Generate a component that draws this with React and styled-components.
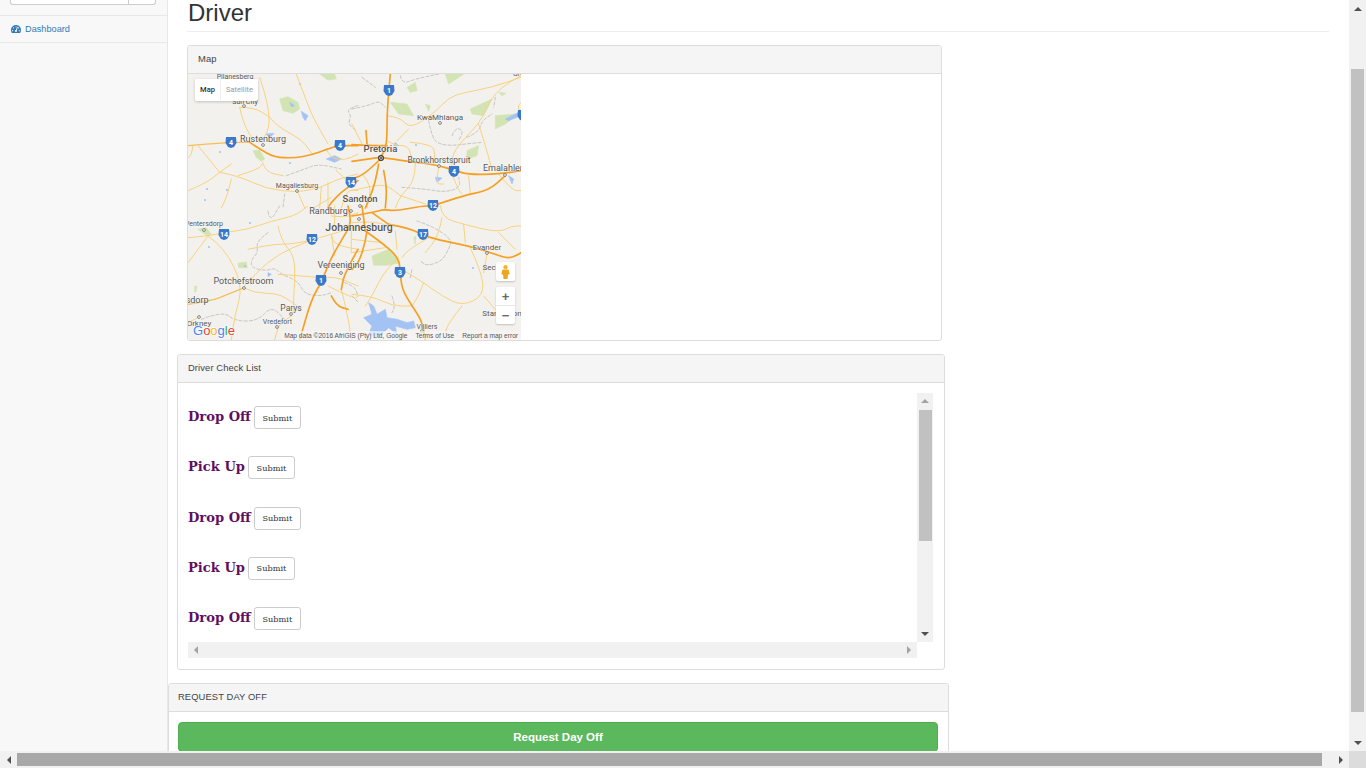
import React from "react";
import styled, { createGlobalStyle } from "styled-components";
import { FaTachometerAlt } from "react-icons/fa";

const GlobalStyle = createGlobalStyle`
  html, body {
    margin: 0;
    padding: 0;
    overflow: hidden;
    background: #fff;
  }
`;

const Screen = styled.div`
  display: grid;
  grid-template-columns: 1349px 17px;
  grid-template-rows: 751px 17px;
  width: 1366px;
  height: 768px;
  overflow: hidden;
  font-family: "Liberation Sans", Arial, sans-serif;
  color: #333;
`;

const Page = styled.div`
  display: flex;
  overflow: hidden;
`;

const Sidebar = styled.aside`
  flex: 0 0 167px;
  background: #f8f8f8;
  border-right: 1px solid #e7e7e7;
`;

const SearchArea = styled.div`
  height: 15px;
  padding: 0 11px 0 10px;
  border-bottom: 1px solid #e7e7e7;
`;

const SearchBox = styled.div`
  display: flex;
  height: 4px;
  background: #fff;
  border: 1px solid #ccc;
  border-top: 0;
  border-radius: 0 0 3px 3px;
  justify-content: flex-end;
`;

const SearchButton = styled.div`
  width: 26px;
  border-left: 1px solid #ccc;
`;

const NavLink = styled.a`
  display: flex;
  align-items: center;
  gap: 4px;
  height: 25px;
  padding: 0 0 1px 11px;
  border-bottom: 1px solid #e7e7e7;
  color: #337ab7;
  font-size: 9.2px;
  svg {
    width: 10px;
    height: 10px;
  }
`;

const Content = styled.main`
  flex: 1;
  padding: 0 20px 0 19px;
  overflow: hidden;
`;

const Title = styled.h1`
  margin: 0 0 13px;
  height: 30px;
  padding: 1px 0 0 1px;
  border-bottom: 1px solid #eee;
  font-size: 24px;
  font-weight: 400;
  line-height: 24px;
  color: #333;
`;

const Panel = styled.section`
  width: ${(p) => p.$width}px;
  margin: 0 0 13px ${(p) => p.$shift || 0}px;
  box-sizing: border-box;
  background: #fff;
  border: 1px solid #ddd;
  border-radius: 3px;
`;

const PanelHeader = styled.div`
  height: 25px;
  padding: 0 ${(p) => p.$inset || 10}px 2px;
  display: flex;
  align-items: center;
  background: #f5f5f5;
  border-bottom: 1px solid #ddd;
  border-radius: 3px 3px 0 0;
  font-size: 9.4px;
  letter-spacing: 0.1px;
  color: #444;
`;

const MapFrame = styled.div`
  position: relative;
  width: 333px;
  height: 266px;
  overflow: hidden;
  background: #f3f1ed;
`;

const MapSvg = styled.svg`
  display: block;
`;

const TypeControl = styled.div`
  position: absolute;
  left: 7px;
  top: 5px;
  display: flex;
  height: 21px;
  padding-bottom: 1px;
  background: #fff;
  border-radius: 2px;
  box-shadow: 0 1px 3px rgba(0, 0, 0, 0.2);
  font-family: Roboto, sans-serif;
  font-size: 7.5px;
`;

const TypeOption = styled.div`
  display: flex;
  align-items: center;
  justify-content: center;
  width: ${(p) => p.$width}px;
  color: ${(p) => (p.$active ? "#333" : "#999")};
  font-weight: ${(p) => (p.$active ? 500 : 400)};
  border-left: ${(p) => (p.$active ? "0" : "1px solid #eee")};
`;

const PegmanButton = styled.div`
  position: absolute;
  left: 308px;
  top: 188px;
  width: 19px;
  height: 19px;
  display: flex;
  align-items: center;
  justify-content: center;
  background: #fff;
  border-radius: 2px;
  box-shadow: 0 1px 2px rgba(0, 0, 0, 0.2);
`;

const ZoomControl = styled.div`
  position: absolute;
  left: 308px;
  top: 213px;
  width: 19px;
  height: 37px;
  display: flex;
  flex-direction: column;
  background: #fff;
  border-radius: 2px;
  box-shadow: 0 1px 2px rgba(0, 0, 0, 0.2);
`;

const ZoomButton = styled.div`
  flex: 1;
  display: flex;
  align-items: center;
  justify-content: center;
  font-size: 13px;
  font-weight: 700;
  line-height: 1;
  color: #666;
  & + & {
    border-top: 1px solid #e6e6e6;
  }
`;

const Attribution = styled.div`
  position: absolute;
  right: 0;
  bottom: 0;
  display: flex;
  gap: 8px;
  height: 9px;
  padding: 0 3px 0 2px;
  background: rgba(245, 245, 245, 0.7);
  font-size: 6.6px;
  line-height: 9px;
  color: #555;
  white-space: nowrap;
`;

const ScrollPane = styled.div`
  display: grid;
  grid-template-columns: 729px 16px;
  grid-template-rows: 249px 16px;
  margin: 10px 0 11px 10px;
  width: 745px;
`;

const ScrollBody = styled.div`
  padding-top: 13px;
  overflow: hidden;
`;

const CheckRow = styled.div`
  display: flex;
  align-items: flex-start;
  gap: 3px;
  height: 50.33px;
`;

const CheckLabel = styled.h4`
  margin: 0;
  height: 23px;
  font-family: "DejaVu Serif", Georgia, serif;
  font-size: 13.1px;
  font-weight: 700;
  line-height: 22px;
  color: #5f0f5f;
`;

const SubmitButton = styled.button`
  width: 47px;
  height: 23px;
  padding: 0;
  background: #fff;
  border: 1px solid #ccc;
  border-radius: 3px;
  font-family: "DejaVu Serif", Georgia, serif;
  font-size: 8.2px;
  color: #333;
`;

const Track = styled.div`
  position: relative;
  display: flex;
  flex-direction: ${(p) => (p.$vertical ? "column" : "row")};
  justify-content: space-between;
  align-items: center;
  background: #f1f1f1;
`;

const ArrowSlot = styled.div`
  flex: 0 0 ${(p) => p.$size}px;
  width: ${(p) => p.$size}px;
  height: ${(p) => p.$size}px;
  display: flex;
  align-items: center;
  justify-content: center;
`;

const Arrow = styled.div`
  width: 0;
  height: 0;
  border-style: solid;
  border-color: transparent;
  border-width: ${(p) => p.$half}px;
  ${(p) => `border-${p.$side}-color: ${p.$color || "#505050"};`}
  ${(p) => `border-${p.$opposite}-width: 0;`}
`;

const VerticalThumb = styled.div`
  position: absolute;
  left: ${(p) => p.$left}px;
  top: ${(p) => p.$top}px;
  width: 13px;
  height: ${(p) => p.$height}px;
  background: #c1c1c1;
`;

const HorizontalThumb = styled.div`
  position: absolute;
  left: 17px;
  top: 2px;
  width: 1305px;
  height: 13px;
  background: #a8a8a8;
`;

const Corner = styled.div`
  background: #dcdcdc;
`;

const RequestBody = styled.div`
  padding: 10px 10px 0 9px;
`;

const RequestButton = styled.button`
  display: block;
  width: 100%;
  height: 30px;
  padding: 0;
  background: #5cb85c;
  border: 1px solid #4cae4c;
  border-radius: 4px;
  font-family: "Liberation Sans", Arial, sans-serif;
  font-size: 11.5px;
  font-weight: 700;
  color: #fff;
`;

// traced per quadrant of the map, in 3x coords from each quadrant's corner
const quadrants = [
  {
    x: 188,
    y: 74,
    green: [
      "275,75 300,68 330,85 335,105 315,118 285,110",
      "395,0 440,0 445,15 420,18",
      "195,230 215,228 230,255 220,262 205,250",
    ],
    water: [
      "340,112 360,125 352,140 345,130",
      "415,255 440,245 460,255 440,265",
      "235,180 258,178 245,192",
      "305,85 320,95 310,98",
    ],
    gray: [
      "295,305 350,285 390,270 460,285",
      "510,95 475,105 490,125 480,150 505,170",
      "290,360 285,402",
    ],
    minor: [
      "0,350 50,330 95,295 130,270",
      "95,295 30,215",
      "15,215 10,245 0,250",
      "130,315 120,360 100,402",
      "95,295 150,305 235,345 330,355 400,340 440,320 470,310 510,300",
      "215,10 232,60 245,130 240,175 215,205",
      "155,100 165,145 190,190",
      "155,100 200,100 245,130",
      "245,130 270,160 340,195 375,243",
      "325,0 355,80 375,130 420,210",
      "150,305 215,285 225,265",
      "225,270 235,295 285,305",
      "420,325 420,402",
      "330,355 350,402",
      "510,350 480,340 460,402",
      "380,400 430,370",
      "415,225 425,250 470,260 510,240",
      "445,290 470,310 490,340",
      "400,340 395,402",
    ],
    medium: ["0,215 120,205 185,205"],
    major: [
      "185,205 215,225 260,250 320,252 370,243 420,225 450,215 510,215",
      "510,320 470,345 430,385 420,402",
    ],
  },
  {
    x: 352,
    y: 74,
    green: [
      "280,0 335,0 305,20 290,30",
      "165,40 190,25 195,50 175,55",
      "115,85 165,90 185,125 140,120",
      "220,90 235,95 230,112",
      "355,105 420,75 395,125 360,120",
      "430,125 495,120 460,150 430,165",
      "345,230 380,215 375,245 345,255",
      "440,55 462,58 450,65",
    ],
    water: [
      "460,135 500,115 507,125 470,140",
      "250,310 270,312 255,325",
      "130,205 140,215 125,215",
      "470,305 485,315 480,330",
    ],
    gray: [
      "145,5 150,30 190,15 260,0",
      "30,10 70,40",
      "0,105 50,95 80,80 100,100",
      "230,140 240,190 260,210 300,215 340,210 390,205",
      "300,185 310,160 335,170 320,200",
      "345,190 380,175 390,140 420,120",
      "150,340 220,345 280,355 325,340 320,310",
      "430,70 425,100",
    ],
    minor: [
      "105,125 145,130 175,165 250,115 290,70 340,55 420,40 507,10",
      "507,5 440,40 400,110 380,150 340,190 300,240 300,290",
      "380,150 405,230 420,290",
      "175,205 240,210 250,240 245,270",
      "135,200 170,165",
      "105,200 130,215 170,215 180,260",
      "190,265 190,320 145,365 130,402",
      "260,280 250,330 275,330",
      "350,305 355,360",
      "440,300 480,350 507,350",
      "300,300 320,350 330,360",
      "145,365 220,390",
      "507,85 495,95 505,115",
      "0,150 30,210",
      "30,300 60,330 45,402",
      "0,350 40,340 100,330 145,365",
    ],
    medium: [],
    major: [
      "115,0 105,100 105,220 85,250",
      "42,170 45,210",
      "0,212 60,215 105,215",
      "0,262 50,255 85,250",
      "85,250 170,262 250,272 310,290 350,302 440,300 507,290",
      "85,255 40,300 0,315",
      "80,270 70,330 40,402",
      "95,290 105,340 100,402",
      "230,400 330,365 410,350 460,305",
    ],
  },
  {
    x: 188,
    y: 206,
    green: [
      "150,172 175,168 178,185 152,185",
      "30,70 55,65 70,85 55,88",
      "20,240 26,240 24,258 20,258",
    ],
    water: ["240,200 250,205 240,212"],
    gray: [
      "240,15 245,50 275,0",
      "240,80 205,105 210,140 190,160 190,185 235,195 260,185 280,205 330,225 350,265 400,270 430,260",
      "40,340 105,315 140,345 210,345 250,300 290,340",
      "470,230 500,240 510,270",
    ],
    minor: [
      "0,95 60,90 105,80 180,70 250,45 320,30 360,0",
      "60,90 30,130 0,170",
      "60,90 110,125 165,240 140,330 130,402",
      "165,245 210,195 270,145 360,105 430,85 510,60",
      "180,130 250,115 300,115 360,105",
      "270,60 280,105 320,150 320,230 315,320",
      "165,245 200,262 270,262 315,290 340,310",
      "270,205 340,210 400,215",
      "310,330 280,350 270,365 260,402",
      "400,215 440,210 510,240",
      "420,240 500,280 510,270",
      "460,250 480,330 490,402",
      "510,130 440,120 430,85",
      "430,85 440,150",
      "490,75 490,140",
      "0,350 30,335",
      "430,30 470,35 510,20",
      "440,0 440,60",
    ],
    medium: ["0,295 70,285 120,265 170,245"],
    major: [
      "480,70 450,120 425,165 400,230 370,280 335,402",
      "510,130 470,200 460,250",
      "430,270 445,300 480,310",
      "480,0 490,40 480,70",
    ],
  },
  {
    x: 352,
    y: 206,
    green: ["60,150 110,130 145,170 105,178 65,178", "185,95 192,90 190,115"],
    water: [
      "50,290 65,300 75,325 100,310 105,335 135,340 165,350 185,345 190,365 165,370 130,360 135,385 110,365 80,395 50,385 60,360 35,335 60,325",
    ],
    gray: [
      "195,45 240,60 300,100 290,130 270,165 225,180 205,165",
      "120,270 130,300 120,320",
      "0,270 20,290",
      "175,215 180,190",
    ],
    minor: [
      "265,0 270,35 335,55 440,80 480,60 507,60",
      "335,55 340,110",
      "270,35 260,90 220,140",
      "230,95 170,130 150,155",
      "355,125 390,200 395,270 330,300 270,270 215,230 150,190",
      "215,230 200,270 180,300",
      "405,145 395,200",
      "330,300 290,350 280,380",
      "140,155 100,190 60,270 40,300",
      "0,265 60,270 120,300 180,300",
      "0,100 90,110",
      "130,75 135,130",
      "0,140 100,125",
      "440,80 490,130",
      "395,270 430,310",
      "0,50 60,45 110,60",
    ],
    medium: [],
    major: [
      "0,30 60,20 95,10 130,15 210,0 240,0",
      "110,55 170,65 230,95 300,110 370,125 430,145 470,158 500,145 507,140",
      "40,75 90,110 140,155 145,200 150,250 180,300 210,345 220,402",
      "45,75 40,110 20,170 0,190",
      "30,0 40,75",
      "60,20 110,55",
    ],
  },
];

const waterDots = [
  [220, 152], [207, 189], [227, 190], [290, 163], [205, 200], [300, 84],
  [416, 145], [209, 247], [250, 223], [245, 266], [473, 268],
];

const labels = [
  ["Pilanesberg", 235, 79, 7],
  ["Sun City", 245, 104, 7],
  ["KwaMhlanga", 440, 120, 8],
  ["Rustenburg", 263, 142, 9],
  ["Pretoria", 380.5, 152, 9.5, 500],
  ["Bronkhorstspruit", 439, 163, 8.5],
  ["Emalahleni", 505, 171, 9],
  ["Magaliesburg", 297, 188, 7],
  ["Sandton", 360, 202, 9.5, 500],
  ["Randburg", 328.5, 214, 9],
  ["Ventersdorp", 204, 226, 7],
  ["Johannesburg", 359, 231, 10.5, 500],
  ["Evander", 487, 250, 8],
  ["Vereeniging", 341, 268, 9],
  ["Secunda", 498, 270, 8],
  ["Potchefstroom", 243.5, 284, 9],
  ["Klerksdorp", 187, 303, 9],
  ["Parys", 291, 311, 8.5],
  ["Standerton", 502, 316, 8],
  ["Vredefort", 277.5, 324, 7],
  ["Orkney", 199, 326, 8],
  ["Villiers", 427, 329, 7],
  ["Groblersdal", 531, 76, 7],
];

const shields = [
  ["1", 389, 90],
  ["4", 231, 142],
  ["4", 340, 145],
  ["4", 454, 171],
  ["14", 351, 182],
  ["12", 433, 205],
  ["14", 224, 234],
  ["12", 312, 239],
  ["17", 423, 234],
  ["1", 321, 280],
  ["3", 400, 272],
  ["1", 523, 115],
];

const cityDots = [
  [263, 145], [297, 191], [244, 106], [440, 123], [439, 166], [505, 175],
  [204, 230], [244, 288], [341, 273], [291, 314], [277, 327], [199, 317],
  [351, 211], [359, 219], [360, 206], [487, 253], [422, 331],
];

function smooth(points) {
  const pts = points.split(" ").map((p) => p.split(",").map(Number));
  if (pts.length < 3) return "M" + pts.join("L");
  let d = `M${pts[0]}`;
  for (let i = 1; i < pts.length - 1; i++) {
    const mx = (pts[i][0] + pts[i + 1][0]) / 2;
    const my = (pts[i][1] + pts[i + 1][1]) / 2;
    d += `Q${pts[i]} ${mx},${my}`;
  }
  return d + `L${pts[pts.length - 1]}`;
}

function Roads({ kind, color, width, dash }) {
  return quadrants.map((q) => (
    <g key={q.x + "-" + q.y} transform={`translate(${q.x} ${q.y}) scale(0.3333)`}>
      {q[kind].map((p) => (
        <path
          key={p}
          d={smooth(p)}
          fill="none"
          stroke={color}
          strokeWidth={width}
          strokeDasharray={dash}
          strokeLinecap="round"
        />
      ))}
    </g>
  ));
}

function Areas({ kind, color }) {
  return quadrants.map((q) => (
    <g key={q.x + "-" + q.y} transform={`translate(${q.x} ${q.y}) scale(0.3333)`}>
      {q[kind].map((p) => (
        <polygon key={p} points={p} fill={color} stroke={color} strokeWidth="2" strokeLinejoin="round" />
      ))}
    </g>
  ));
}

function MapDrawing() {
  return (
    <MapSvg width="333" height="266" viewBox="188 74 333 266">
      <Areas kind="green" color="#d3e4b4" />
      <Areas kind="water" color="#a3c3f5" />
      {waterDots.map(([x, y]) => (
        <circle key={x + "-" + y} cx={x} cy={y} r="1.1" fill="#a3c3f5" />
      ))}
      <Roads kind="gray" color="#bdbdbd" width="2.6" dash="9 6" />
      <Roads kind="minor" color="#f7d27d" width="3" />
      <Roads kind="medium" color="#f6bf58" width="4" />
      <Roads kind="major" color="#f59f23" width="5" />
      {cityDots.map(([x, y]) => (
        <circle key={x + "-" + y} cx={x} cy={y} r="1.4" fill="#fff" stroke="#666" strokeWidth="0.8" />
      ))}
      <circle cx="381" cy="158" r="2.4" fill="#fff" stroke="#333" strokeWidth="1.2" />
      <circle cx="381" cy="158" r="1" fill="#333" />
      {labels.map(([text, x, y, size, weight]) => (
        <text
          key={text}
          x={x}
          y={y}
          fontSize={size}
          fontWeight={weight || 400}
          textAnchor="middle"
          fill="#555"
          stroke="#fff"
          strokeWidth="0.4"
          paintOrder="stroke"
          fontFamily="Roboto, sans-serif"
        >
          {text}
        </text>
      ))}
      {shields.map(([num, x, y]) => (
        <g key={num + x}>
          <path
            d={`M${x - 5} ${y - 5}H${x + 5}L${x + 5.5} ${y + 1}L${x + 3} ${y + 5}L${x} ${y + 6}L${x - 3} ${y + 5}L${x - 5.5} ${y + 1}Z`}
            fill="#3a78c9"
          />
          <text x={x} y={y + 2.5} fontSize="7" fontWeight="700" textAnchor="middle" fill="#fff" fontFamily="Roboto, sans-serif">
            {num}
          </text>
        </g>
      ))}
      <text x="193" y="335" fontSize="13" fontFamily="'Liberation Sans', sans-serif" stroke="#fff" strokeWidth="1" paintOrder="stroke">
        <tspan fill="#4285f4">G</tspan>
        <tspan fill="#ea4335">o</tspan>
        <tspan fill="#fbbc05">o</tspan>
        <tspan fill="#4285f4">g</tspan>
        <tspan fill="#34a853">l</tspan>
        <tspan fill="#ea4335">e</tspan>
      </text>
    </MapSvg>
  );
}

function Pegman() {
  return (
    <svg width="9" height="14" viewBox="0 0 9 14">
      <circle cx="4.5" cy="2.2" r="2.1" fill="#f4b32c" />
      <path d="M1.5 4.6h6l1.2 4.6-1.7.4-.5 4.4h-4l-.5-4.4-1.7-.4z" fill="#eda51c" />
    </svg>
  );
}

function CheckListRow({ label }) {
  return (
    <CheckRow>
      <CheckLabel>{label}</CheckLabel>
      <SubmitButton type="button">Submit</SubmitButton>
    </CheckRow>
  );
}

function App() {
  const rows = ["Drop Off", "Pick Up", "Drop Off", "Pick Up", "Drop Off"];

  return (
    <>
      <GlobalStyle />
      <Screen>
        <Page>
          <Sidebar>
            <SearchArea>
              <SearchBox>
                <SearchButton />
              </SearchBox>
            </SearchArea>
            <NavLink>
              <FaTachometerAlt />
              Dashboard
            </NavLink>
          </Sidebar>
          <Content>
            <Title>Driver</Title>
            <Panel $width={755}>
              <PanelHeader>Map</PanelHeader>
              <MapFrame>
                <MapDrawing />
                <TypeControl>
                  <TypeOption $active $width={25}>Map</TypeOption>
                  <TypeOption $width={37}>Satellite</TypeOption>
                </TypeControl>
                <PegmanButton>
                  <Pegman />
                </PegmanButton>
                <ZoomControl>
                  <ZoomButton>+</ZoomButton>
                  <ZoomButton>−</ZoomButton>
                </ZoomControl>
                <Attribution>
                  <span>Map data ©2016 AfriGIS (Pty) Ltd, Google</span>
                  <span>Terms of Use</span>
                  <span>Report a map error</span>
                </Attribution>
              </MapFrame>
            </Panel>
            <Panel $width={768} $shift={-10}>
              <PanelHeader>Driver Check List</PanelHeader>
              <ScrollPane>
                <ScrollBody>
                  {rows.map((label, i) => (
                    <CheckListRow key={i} label={label} />
                  ))}
                </ScrollBody>
                <Track $vertical>
                  <ArrowSlot $size={16}>
                    <Arrow $half={4} $side="bottom" $opposite="top" $color="#a3a3a3" />
                  </ArrowSlot>
                  <VerticalThumb $left={2} $top={17} $height={131} />
                  <ArrowSlot $size={16}>
                    <Arrow $half={4} $side="top" $opposite="bottom" />
                  </ArrowSlot>
                </Track>
                <Track>
                  <ArrowSlot $size={16}>
                    <Arrow $half={4} $side="right" $opposite="left" $color="#a3a3a3" />
                  </ArrowSlot>
                  <ArrowSlot $size={16}>
                    <Arrow $half={4} $side="left" $opposite="right" $color="#a3a3a3" />
                  </ArrowSlot>
                </Track>
              </ScrollPane>
            </Panel>
            <Panel $width={781} $shift={-19}>
              <PanelHeader $inset={9}>REQUEST DAY OFF</PanelHeader>
              <RequestBody>
                <RequestButton type="button">Request Day Off</RequestButton>
              </RequestBody>
            </Panel>
          </Content>
        </Page>
        <Track $vertical>
          <ArrowSlot $size={17}>
            <Arrow $half={4} $side="bottom" $opposite="top" />
          </ArrowSlot>
          <VerticalThumb $left={2} $top={69} $height={643} />
          <ArrowSlot $size={17}>
            <Arrow $half={4} $side="top" $opposite="bottom" />
          </ArrowSlot>
        </Track>
        <Track>
          <ArrowSlot $size={17}>
            <Arrow $half={4} $side="right" $opposite="left" />
          </ArrowSlot>
          <HorizontalThumb />
          <ArrowSlot $size={17}>
            <Arrow $half={4} $side="left" $opposite="right" />
          </ArrowSlot>
        </Track>
        <Corner />
      </Screen>
    </>
  );
}

export default App;
